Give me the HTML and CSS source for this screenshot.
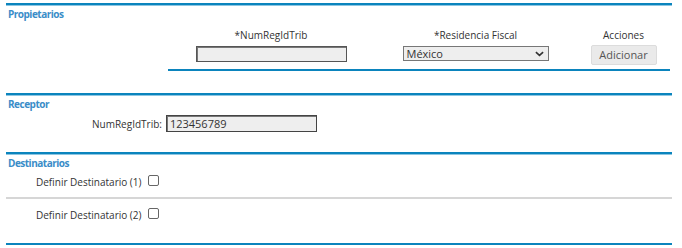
FILE: index.html
```html
<!DOCTYPE html>
<html lang="es">
<head>
<meta charset="utf-8">
<link rel="stylesheet" href="styles.css">
</head>
<body>
<div class="page">
  <section class="sec sec-prop">
    <div class="sec-title">Propietarios</div>
    <div class="prop-grid">
      <div class="hdr c1">*NumRegIdTrib</div>
      <div class="hdr c2">*Residencia Fiscal</div>
      <div class="hdr c3">Acciones</div>
      <div class="cell c1"><span class="inp inp-prop"></span></div>
      <div class="cell c2"><span class="sel">México<svg class="chev" viewBox="0 0 10 6" width="9" height="6"><path d="M1 1 L5 4.5 L9 1" fill="none" stroke="#333" stroke-width="1.8"/></svg></span></div>
      <div class="cell c3"><span class="btn">Adicionar</span></div>
    </div>
  </section>
  <section class="sec sec-rec">
    <div class="sec-title">Receptor</div>
    <div class="rec-row">
      <span class="lbl">NumRegIdTrib:</span>
      <span class="inp inp-rec">123456789</span>
    </div>
  </section>
  <section class="sec sec-dest">
    <div class="sec-title">Destinatarios</div>
    <div class="dest-row first">
      <span class="lbl">Definir Destinatario (1)</span>
      <span class="chk"></span>
    </div>
    <div class="dest-row second">
      <span class="lbl">Definir Destinatario (2)</span>
      <span class="chk"></span>
    </div>
  </section>
  <div class="bottom-line"></div>
</div>
</body>
</html>
```
FILE: styles.css
```css
html, body {
  margin: 0;
  padding: 0;
  background: #fff;
}
body {
  font-family: "Open Sans", "DejaVu Sans", sans-serif;
  font-size: 10px;
  color: #333;
}
.page {
  width: 666px;
  margin-left: 6px;
  padding-top: 3px;
}
.sec {
  border-top: 2px solid #0b84bd;
  box-shadow: inset 0 1px 0 #8cc6e2;
}
.sec-title {
  color: #3a8dc8;
  font-weight: bold;
  font-size: 10px;
  letter-spacing: -0.5px;
  padding: 2px 0 0 2px;
  height: 14px;
  line-height: 14px;
}
.prop-grid {
  margin-left: 162px;
  width: 502px;
  display: grid;
  grid-template-columns: 206px 203px 93px;
  grid-template-rows: 21px 26px;
  border-bottom: 2px solid #0b84bd;
  padding-bottom: 1px;
}
.hdr {
  text-align: center;
  line-height: 14px;
  padding-top: 7px;
}
.cell {
  display: flex;
  justify-content: center;
  align-items: flex-start;
  padding-top: 4px;
}
.inp {
  display: inline-block;
  box-sizing: border-box;
  background: #eeeeee;
  border: 1px solid #555;
  box-shadow: inset 1px 1px 0 #777;
  height: 16px;
  line-height: 14px;
  font-size: 11px;
  padding-left: 3px;
}
.inp-prop { width: 151px; }
.sel {
  display: flex;
  align-items: center;
  justify-content: space-between;
  box-sizing: border-box;
  width: 146px;
  height: 15px;
  border: 1px solid #777;
  background: #eeeeee;
  padding: 0 4px 0 3px;
  font-size: 11px;
  color: #333;
}
.btn {
  display: inline-block;
  box-sizing: border-box;
  width: 66px;
  height: 20px;
  line-height: 18px;
  margin-top: -1px;
  text-align: center;
  background: #eaeaea;
  border: 1px solid #dcdcdc;
  border-radius: 2px;
  color: #555;
  font-size: 11px;
}
.sec-rec {
  margin-top: 22px;
  height: 57px;
}
.rec-row {
  display: flex;
  align-items: center;
  padding-left: 86px;
  padding-top: 4px;
  gap: 4px;
}
.inp-rec {
  width: 151px;
  height: 17px;
  line-height: 15px;
  border-color: #444;
}
.dest-row {
  display: flex;
  align-items: center;
  gap: 7px;
  padding-left: 30px;
  box-sizing: border-box;
}
.dest-row.first {
  height: 29px;
  border-bottom: 2px solid #d6d6d6;
  padding-bottom: 3px;
}
.dest-row.second {
  height: 44px;
  padding-bottom: 12px;
}
.chk {
  display: inline-block;
  box-sizing: border-box;
  width: 11px;
  height: 11px;
  border: 1px solid #666;
  border-radius: 2px;
  background: #fff;
  margin-top: -3px;
}
.bottom-line {
  border-top: 2px solid #0b84bd;
  box-shadow: 0 1px 0 #8cc6e2;
  height: 1px;
}
```
